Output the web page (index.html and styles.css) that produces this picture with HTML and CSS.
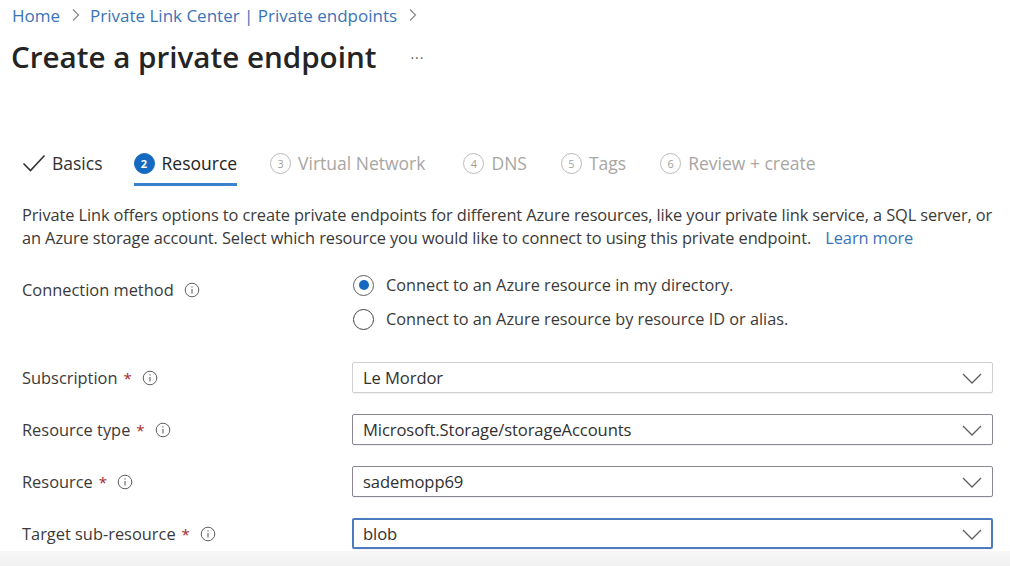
FILE: index.html
```html
<!DOCTYPE html>
<html>
<head>
<meta charset="utf-8">
<link rel="stylesheet" href="styles.css">
</head>
<body>
<div class="page">
  <nav class="crumbs">
    <a class="crumb">Home</a>
    <svg class="sep" width="10" height="14" viewBox="0 0 10 14"><path d="M2 1.5 L7.5 7 L2 12.5" fill="none" stroke="#8a8886" stroke-width="1.2"/></svg>
    <a class="crumb">Private Link Center | Private endpoints</a>
    <svg class="sep" width="10" height="14" viewBox="0 0 10 14"><path d="M2 1.5 L7.5 7 L2 12.5" fill="none" stroke="#8a8886" stroke-width="1.2"/></svg>
  </nav>
  <div class="titlebar">
    <h1 class="title">Create a private endpoint</h1>
    <span class="more">···</span>
  </div>

  <div class="tabs">
    <div class="tab done">
      <svg class="check" width="24" height="20" viewBox="0 0 24 20"><path d="M1.5 10.5 L8.5 17.5 L22.5 2.5" fill="none" stroke="#323130" stroke-width="1.6"/></svg>
      <span>Basics</span>
    </div>
    <div class="tab active">
      <span class="num">2</span>
      <span>Resource</span>
    </div>
    <div class="tab wide">
      <span class="num">3</span>
      <span>Virtual Network</span>
    </div>
    <div class="tab">
      <span class="num">4</span>
      <span>DNS</span>
    </div>
    <div class="tab">
      <span class="num">5</span>
      <span>Tags</span>
    </div>
    <div class="tab">
      <span class="num">6</span>
      <span>Review + create</span>
    </div>
  </div>

  <p class="desc">Private Link offers options to create private endpoints for different Azure resources, like your private link service, a SQL server, or<br>an Azure storage account. Select which resource you would like to connect to using this private endpoint. <a class="learn">Learn more</a></p>

  <div class="form">
    <div class="row conn">
      <div class="label">Connection method
        <svg class="info" width="16" height="16" viewBox="0 0 16 16"><circle cx="8" cy="8" r="6.8" fill="none" stroke="#605e5c" stroke-width="1"/><path d="M8 7 V11.5" stroke="#605e5c" stroke-width="1.1"/><circle cx="8" cy="4.9" r="0.7" fill="#605e5c"/></svg>
      </div>
      <div class="radios">
        <label class="radio"><span class="dot on"></span>Connect to an Azure resource in my directory.</label>
        <label class="radio"><span class="dot"></span>Connect to an Azure resource by resource ID or alias.</label>
      </div>
    </div>

    <div class="row">
      <div class="label">Subscription <span class="req">*</span>
        <svg class="info" width="16" height="16" viewBox="0 0 16 16"><circle cx="8" cy="8" r="6.8" fill="none" stroke="#605e5c" stroke-width="1"/><path d="M8 7 V11.5" stroke="#605e5c" stroke-width="1.1"/><circle cx="8" cy="4.9" r="0.7" fill="#605e5c"/></svg>
      </div>
      <div class="select">
        <span>Le Mordor</span>
        <svg class="chev" width="20" height="11" viewBox="0 0 20 11"><path d="M1 1 L10 10 L19 1" fill="none" stroke="#605e5c" stroke-width="1.3"/></svg>
      </div>
    </div>

    <div class="row">
      <div class="label">Resource type <span class="req">*</span>
        <svg class="info" width="16" height="16" viewBox="0 0 16 16"><circle cx="8" cy="8" r="6.8" fill="none" stroke="#605e5c" stroke-width="1"/><path d="M8 7 V11.5" stroke="#605e5c" stroke-width="1.1"/><circle cx="8" cy="4.9" r="0.7" fill="#605e5c"/></svg>
      </div>
      <div class="select dark">
        <span>Microsoft.Storage/storageAccounts</span>
        <svg class="chev" width="20" height="11" viewBox="0 0 20 11"><path d="M1 1 L10 10 L19 1" fill="none" stroke="#605e5c" stroke-width="1.3"/></svg>
      </div>
    </div>

    <div class="row">
      <div class="label">Resource <span class="req">*</span>
        <svg class="info" width="16" height="16" viewBox="0 0 16 16"><circle cx="8" cy="8" r="6.8" fill="none" stroke="#605e5c" stroke-width="1"/><path d="M8 7 V11.5" stroke="#605e5c" stroke-width="1.1"/><circle cx="8" cy="4.9" r="0.7" fill="#605e5c"/></svg>
      </div>
      <div class="select dark">
        <span>sademopp69</span>
        <svg class="chev" width="20" height="11" viewBox="0 0 20 11"><path d="M1 1 L10 10 L19 1" fill="none" stroke="#605e5c" stroke-width="1.3"/></svg>
      </div>
    </div>

    <div class="row">
      <div class="label">Target sub-resource <span class="req">*</span>
        <svg class="info" width="16" height="16" viewBox="0 0 16 16"><circle cx="8" cy="8" r="6.8" fill="none" stroke="#605e5c" stroke-width="1"/><path d="M8 7 V11.5" stroke="#605e5c" stroke-width="1.1"/><circle cx="8" cy="4.9" r="0.7" fill="#605e5c"/></svg>
      </div>
      <div class="select focus">
        <span>blob</span>
        <svg class="chev" width="20" height="11" viewBox="0 0 20 11"><path d="M1 1 L10 10 L19 1" fill="none" stroke="#605e5c" stroke-width="1.3"/></svg>
      </div>
    </div>
  </div>
</div>
<div class="footer"></div>
</body>
</html>
```

FILE: styles.css
```css
html, body {
  margin: 0;
  padding: 0;
  background: #ffffff;
  width: 1010px;
  height: 566px;
  overflow: hidden;
}
body {
  font-family: "Open Sans", "Noto Sans", "Liberation Sans", sans-serif;
  color: #323130;
  position: relative;
}
.page {
  padding: 4px 0 0 0;
}
.crumbs {
  display: flex;
  align-items: center;
  height: 22px;
  padding-left: 12px;
  font-size: 17px;
  letter-spacing: 0;
}
.crumb {
  color: #3a73b8;
}
.sep {
  margin: 0 9px 0 11px;
}
.titlebar {
  display: flex;
  align-items: center;
  height: 40px;
  margin-top: 10px;
  padding-left: 11px;
}
.title {
  margin: 0;
  font-size: 29.6px;
  font-weight: 600;
  color: #242424;
  letter-spacing: 0;
}
.more {
  margin-left: 34px;
  color: #605e5c;
  font-size: 14px;
  margin-top: 2px;
  letter-spacing: 1px;
}
.tabs {
  display: flex;
  margin-top: 67px;
  padding-left: 22px;
  font-size: 17.5px;
  letter-spacing: 0;
}
.tab {
  display: flex;
  align-items: center;
  height: 40px;
  border-bottom: 3px solid transparent;
  margin-right: 34px;
  color: #a8a6a4;
}
.tab.done {
  color: #323130;
  margin-right: 31px;
}
.tab.wide {
  margin-right: 38px;
}
.tab.done .check {
  margin-right: 6px;
}
.tab.active {
  color: #242424;
  border-bottom-color: #3b82cc;
  margin-right: 33px;
}
.num {
  display: inline-flex;
  align-items: center;
  justify-content: center;
  width: 19px;
  height: 19px;
  border: 1px solid #bcbab8;
  border-radius: 50%;
  font-size: 11px;
  margin-right: 7px;
  color: #a19f9d;
  letter-spacing: 0;
}
.tab.active .num {
  background: #1469c0;
  border-color: #1469c0;
  color: #fff;
  font-weight: 700;
}
.desc {
  margin: 17px 0 0 22px;
  width: 985px;
  font-size: 16.4px;
  line-height: 23px;
  color: #3b3a39;
  letter-spacing: -0.1px;
  white-space: nowrap;
}
.learn {
  color: #3a73b8;
  margin-left: 10px;
}
.form {
  margin-top: 23px;
  padding-left: 22px;
}
.row {
  display: grid;
  grid-template-columns: 330px 641px;
  align-items: center;
  height: 31px;
  margin-bottom: 21px;
}
.row.conn {
  align-items: start;
  height: auto;
  margin-bottom: 32px;
}
.label {
  display: flex;
  align-items: center;
  font-size: 16.4px;
  color: #3b3a39;
  letter-spacing: 0;
}
.row.conn .label {
  margin-top: 6px;
}
.req {
  color: #a4262c;
  margin-left: 6px;
  font-size: 15px;
}
.info {
  margin-left: 10px;
}
.radios {
  display: flex;
  flex-direction: column;
  gap: 12px;
  margin-top: 2px;
}
.radio {
  display: flex;
  align-items: center;
  height: 22px;
  font-size: 16.3px;
  color: #3b3a39;
  letter-spacing: 0;
}
.dot {
  width: 21px;
  height: 21px;
  border: 1.2px solid #444;
  border-radius: 50%;
  box-sizing: border-box;
  margin: 0 12px 0 1px;
  display: inline-flex;
  align-items: center;
  justify-content: center;
}
.dot.on {
  border-color: #5e5e5e;
}
.dot.on::after {
  content: "";
  width: 10px;
  height: 10px;
  border-radius: 50%;
  background: #1469c0;
}
.select {
  box-sizing: border-box;
  height: 31px;
  border: 1px solid #d0d0d0;
  border-radius: 2px;
  display: flex;
  align-items: center;
  justify-content: space-between;
  padding: 0 10px 0 10px;
  font-size: 16.6px;
  color: #323130;
  letter-spacing: -0.1px;
  box-shadow: 0 1px 1px rgba(0,0,0,0.06);
}
.select.dark {
  border-color: #8c8593;
}
.select.focus {
  border: 2px solid #4d7bbf;
  padding-left: 9px;
  padding-right: 9px;
}
.chev {
  margin-top: 1px;
}
.footer {
  position: absolute;
  left: 0;
  right: 0;
  bottom: 0;
  height: 15px;
  background: linear-gradient(#f7f7f7, #f0f0f0);
}
```
